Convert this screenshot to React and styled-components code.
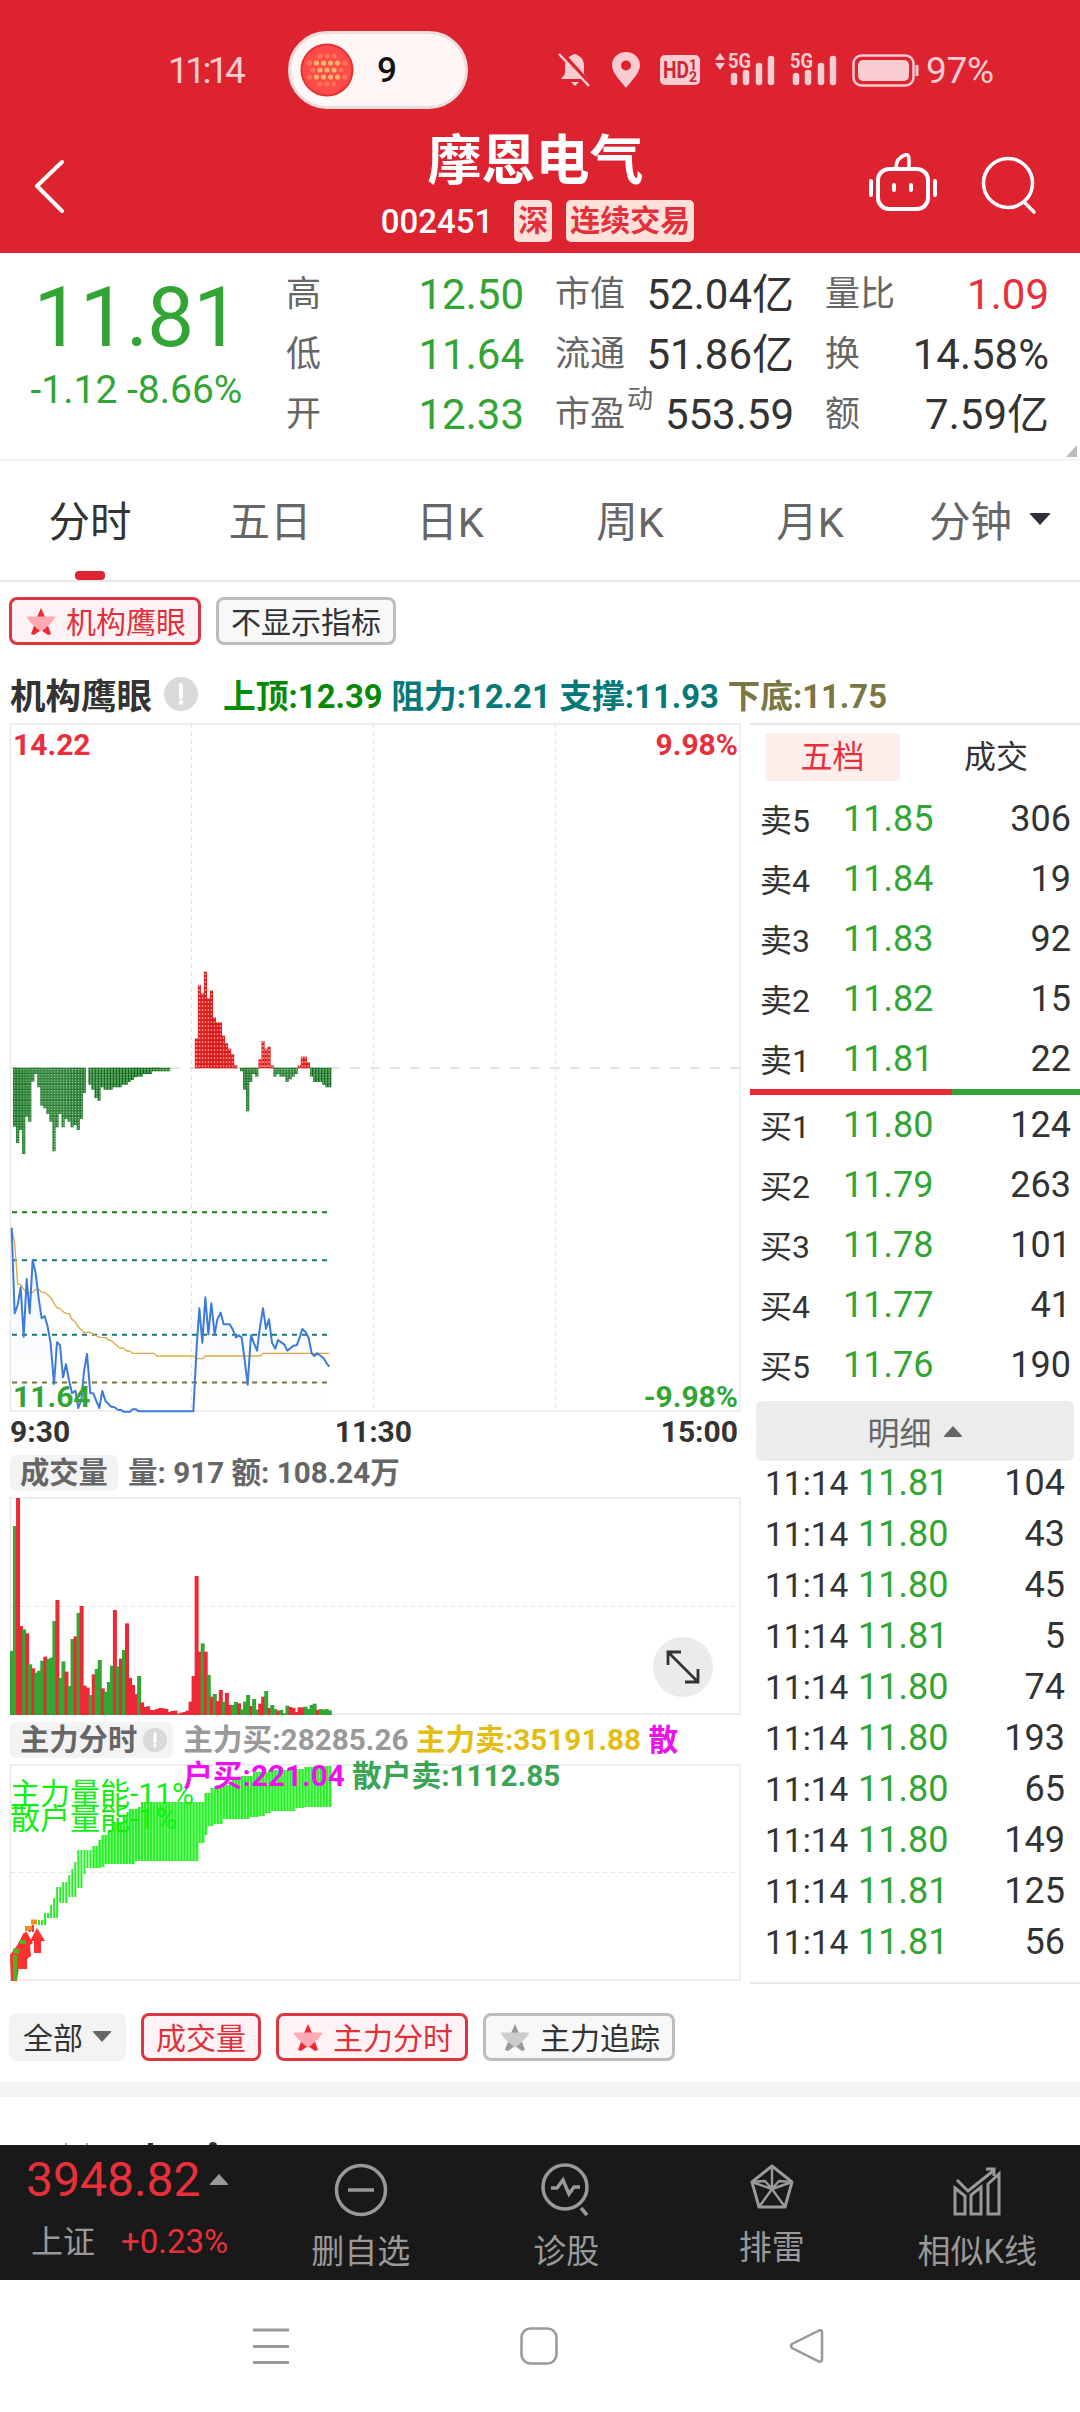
import React from 'react';
import styled, { createGlobalStyle } from 'styled-components';

const GlobalStyle = createGlobalStyle`
  * { box-sizing: border-box; }
  body {
    margin: 0;
    background: #fff;
    color: #333;
    font-family: Roboto, "Noto Sans CJK SC", sans-serif;
  }
  svg { display: block; flex: none; overflow: visible; }
`;

const RED = '#e8303a';
const GREEN = '#33a535';

/* ---------- data ---------- */

const quotes = [
  [['高', '12.50', GREEN], ['市值', '52.04亿'], ['量比', '1.09', RED]],
  [['低', '11.64', GREEN], ['流通', '51.86亿'], ['换', '14.58%']],
  [['开', '12.33', GREEN], ['市盈', '553.59', null, '动'], ['额', '7.59亿']],
];

const tabs = ['分时', '五日', '日K', '周K', '月K', '分钟'];

const asks = [['卖5', '11.85', 306], ['卖4', '11.84', 19], ['卖3', '11.83', 92], ['卖2', '11.82', 15], ['卖1', '11.81', 22]];
const bids = [['买1', '11.80', 124], ['买2', '11.79', 263], ['买3', '11.78', 101], ['买4', '11.77', 41], ['买5', '11.76', 190]];

const ticks = [
  ['11.81', 104], ['11.80', 43], ['11.80', 45], ['11.81', 5], ['11.80', 74],
  ['11.80', 193], ['11.80', 65], ['11.80', 149], ['11.81', 125], ['11.81', 56],
];

// price and average lines, three units to a pixel
const priceLine = '35,143 44,400 53,375 62,322 71,470 80,297 89,400 98,240 107,280 116,355 125,415 134,408 143,440 152,490 162,612 171,487 180,495 189,592 198,553 207,600 216,640 226,632 235,684 244,660 252,575 261,522 271,640 280,640 289,663 298,684 307,633 317,664 334,680 344,682 353,689 362,690 371,695 390,695 398,688 408,688 416,694 580,694 590,500 598,385 607,488 616,352 625,463 634,370 644,463 652,418 662,398 671,433 689,433 698,448 708,472 716,466 725,472 734,540 743,614 753,466 762,490 771,512 780,440 789,385 798,446 807,418 816,488 826,506 834,480 853,494 862,512 880,497 890,496 898,475 907,447 917,456 926,474 935,520 943,528 952,520 971,535 980,550 988,560';
const averageLine = '35,143 44,190 53,312 62,314 71,328 80,338 98,337 107,328 116,328 125,337 134,337 144,345 153,353 162,370 171,384 180,385 189,395 198,400 207,401 216,418 225,425 234,440 252,457 270,457 289,468 300,472 318,473 325,480 334,482 352,498 360,504 371,505 380,513 389,513 398,520 462,520 471,528 580,528 590,536 607,536 616,528 780,528 789,520 988,520';

// [first bar centre, bar ends]; baseline is 384
const eagleBars = [
  [44, 558, 607, 568, 640, 528, 543, 423, 400, 440, 495, 503, 520, 543, 632, 560, 520, 560, 535, 543, 560, 553, 568, 535, 457],
  [270, 432, 447, 472, 480, 440, 447, 447, 447, 440, 440, 440, 432, 432, 424, 418, 410, 408, 408, 400, 400, 400, 392, 392, 392, 392, 392, 392],
  [589, 295, 135, 160, 95, 175, 152, 232, 247, 247, 287, 310, 326, 342, 375],
  [725, 392, 447, 512, 424, 400, 408],
  [780, 358, 303, 326, 320, 375],
  [825, 408, 400, 408, 408, 424, 416, 408, 400],
  [898, 375, 350, 350, 367],
  [935, 408, 424, 424, 424, 432, 440, 440],
];

const volumes = 'G663 G288 R204 R588 G598 R610 G703 R715 G728 G722 G692 R680 G687 G683 G573 R510 G744 G694 R725 G768 G627 R619 G549 R528 R767 R773 G795 R733 G717 G690 R775 G785 G756 G707 R540 G709 R686 G660 R580 R744 R765 R792 G738 R817 R831 R829 R840 R840 R837 R834 R835 R837 R846 R843 R842 R851 R848 R846 R842 R815 R738 R438 R665 G640 R665 G735 R800 G792 R813 R780 G815 R789 R825 G825 G816 R820 G838 G815 G795 R828 G807 G839 R821 R800 G783 R834 G825 G837 R842 G840 G850 G827 R831 R834 R846 R832 R832 G830 G837 G825 G821 R840 G837 G839 G837 G841'.split(' ');

const bandTop = [[38, 1920], [42, 1913], [48, 1905], [51, 1898], [56, 1887], [60, 1882], [66, 1875], [69, 1869], [72, 1862], [77, 1850], [87, 1850], [92, 1846], [96, 1840], [100, 1835], [106, 1830], [112, 1822], [120, 1815], [128, 1809], [136, 1807], [139, 1802], [199, 1802], [203, 1793], [209, 1788], [215, 1785], [230, 1780], [240, 1776], [252, 1772], [268, 1770], [290, 1769], [302, 1767], [312, 1766]];
const bandBottom = [[38, 1925], [45, 1918], [54, 1918], [58, 1903], [64, 1903], [66, 1897], [73, 1897], [76, 1888], [79, 1888], [82, 1874], [86, 1868], [100, 1867], [104, 1864], [131, 1864], [134, 1861], [195, 1861], [198, 1843], [202, 1835], [206, 1826], [212, 1824], [220, 1819], [236, 1819], [248, 1817], [258, 1816], [263, 1813], [270, 1811], [289, 1811], [294, 1808], [302, 1807], [330, 1807]];

const levelAt = (steps, x) => {
  let y = steps[0][1];
  steps.forEach(([sx, sy]) => { if (sx <= x) y = sy; });
  return y;
};

/* ---------- header ---------- */

const Header = styled.header`
  height: 253px;
  background: #dc232f;
  color: #fff;
`;

const StatusBar = styled.div`
  display: flex;
  align-items: center;
  height: 109px;
  padding: 31px 0 0 168px;
`;

const StatusText = styled.span`
  flex: none;
  width: ${p => p.$width}px;
  color: #f8ccd0;
  font-size: 37px;
  letter-spacing: ${p => p.$tight}px;
  white-space: nowrap;
`;

const Island = styled.div`
  display: flex;
  align-items: center;
  flex: none;
  gap: 23px;
  width: 180px;
  height: 78px;
  margin: 0 90px 0 44px;
  padding-left: 9px;
  border: 3px solid #ecdcdc;
  border-radius: 39px;
  background: #fff6f6;
  color: #111;
  font-size: 35px;
  font-weight: 500;
`;

const TitleBar = styled.div`
  display: flex;
  justify-content: space-between;
  height: 143px;
  padding: 0 43px 0 32px;
`;

const StockName = styled.div`
  display: flex;
  flex-direction: column;
  align-items: center;
  padding: 21px 0 0 134px;
`;

const Name = styled.h1`
  margin: 0;
  font-size: 54px;
  line-height: 64px;
  font-weight: 700;
`;

const CodeRow = styled.div`
  display: flex;
  align-items: center;
  height: 42px;
  margin: 6px 0 0 4px;
  font-size: 33px;
  font-weight: 500;
`;

const Tag = styled.span`
  height: 42px;
  margin-left: ${p => p.$gap}px;
  padding: 0 4px;
  border-radius: 5px;
  background: #ffe1da;
  color: #e5303c;
  font-size: 30px;
  line-height: 41px;
  font-weight: 700;
`;

const HeaderIcons = styled.div`
  display: flex;
  align-items: flex-start;
  gap: 44px;
  padding-top: 43px;
  svg + svg { margin-top: 3px; }
`;

/* ---------- quote ---------- */

const Quote = styled.section`
  display: flex;
  position: relative;
  height: 208px;
  padding-top: 12px;
  border-bottom: 2px solid #f3f3f3;
`;

const LastPrice = styled.div`
  width: 286px;
  padding: 0 13px 0 0;
  color: ${GREEN};
  text-align: center;
`;

const Big = styled.div`
  margin-top: 9px;
  font-size: 84px;
  line-height: 88px;
  letter-spacing: -1px;
`;

const Change = styled.div`
  padding-top: 3px;
  font-size: 39px;
  line-height: 50px;
  white-space: nowrap;
`;

const Grid = styled.div`
  display: grid;
  grid-template-columns: 238px 239px 224px;
  grid-template-rows: repeat(3, 60px);
  column-gap: 31px;
`;

const Cell = styled.div`
  display: flex;
  align-items: center;
  justify-content: space-between;
  line-height: 60px;
  white-space: nowrap;
`;

const CellLabel = styled.span`
  display: flex;
  color: #666;
  font-size: 35px;
  sup {
    align-self: flex-start;
    margin-left: 2px;
    font-size: 26px;
    line-height: 28px;
  }
`;

const CellValue = styled.span`
  color: ${p => p.$color || '#333'};
  font-size: 42px;
`;

const Corner = styled.i`
  position: absolute;
  right: 3px;
  bottom: 2px;
  border-left: 11px solid transparent;
  border-bottom: 12px solid #bbb;
`;

/* ---------- tabs and chips ---------- */

const Tabs = styled.nav`
  display: flex;
  height: 121px;
  border-bottom: 2px solid #e6e6e6;
`;

const Tab = styled.div`
  display: flex;
  align-items: center;
  justify-content: center;
  position: relative;
  width: 180px;
  padding-bottom: 3px;
  gap: 17px;
  color: ${p => (p.$on ? '#333' : '#666')};
  font-size: 41.5px;
  &::after {
    content: '';
    display: ${p => (p.$on ? 'block' : 'none')};
    position: absolute;
    bottom: 0;
    width: 30px;
    height: 9px;
    border-radius: 4px;
    background: #dc232f;
  }
`;

const Caret = styled.i`
  border: ${p => p.$size}px solid transparent;
  border-top: ${p => p.$size + 1}px solid ${p => p.$color};
  border-bottom: 0;
  border-radius: 2px;
  transform: rotate(${p => (p.$up ? 180 : 0)}deg);
`;

const ChipRow = styled.div`
  display: flex;
  gap: 15px;
  padding: ${p => p.$top}px 9px 0;
`;

const Chip = styled.div`
  display: flex;
  align-items: center;
  gap: ${p => (p.$plain ? 9 : 11)}px;
  height: 48px;
  padding: 0 ${p => (p.$plain ? 14 : 12)}px 2px;
  border: ${p => (p.$plain ? 0 : 3)}px solid ${p => (p.$on ? '#dc3640' : '#bdbdbd')};
  border-radius: 8px;
  background: ${p => (p.$on ? '#fff2f4' : p.$plain ? '#f3f3f3' : '#f8f8f8')};
  color: ${p => (p.$on ? '#e0303b' : '#333')};
  font-size: 30px;
  white-space: nowrap;
  svg { margin: 2px 0 0 3px; }
`;

/* ---------- charts ---------- */

const IndicatorRow = styled.div`
  display: flex;
  align-items: center;
  height: 78px;
  padding: 19px 0 0 10px;
  font-size: 35.5px;
  font-weight: 700;
  white-space: nowrap;
`;

const Levels = styled.div`
  display: flex;
  gap: 8.5px;
  margin-left: 25px;
  font-size: 32.8px;
`;

const Main = styled.section`
  display: flex;
  height: 1261px;
`;

const Charts = styled.div`
  width: 750px;
`;

const TimeAxis = styled.div`
  display: flex;
  justify-content: space-between;
  height: 38px;
  padding: 0 12px 0 10px;
  font-size: 30px;
  line-height: 38px;
  font-weight: 700;
  span:nth-child(2) { margin-left: 16px; }
`;

const SubHeader = styled.div`
  display: flex;
  align-items: flex-start;
  position: relative;
  height: ${p => p.$height}px;
  padding: ${p => p.$top}px 0 0 10px;
  color: #666;
  line-height: 36px;
  font-weight: 700;
`;

const SubTag = styled.span`
  display: flex;
  align-items: center;
  gap: 6px;
  flex: none;
  height: 36px;
  padding: 0 ${p => p.$end}px 0 10px;
  border-radius: 6px;
  background: #f3f3f3;
  font-size: 29.3px;
  line-height: 34px;
`;

// the wrapped second line runs down over the plot below
const Legend = styled.div`
  width: 510px;
  margin-left: 10px;
  font-size: 29.7px;
  line-height: 35.5px;
  word-break: break-all;
  z-index: 1;
`;

const VolumeText = styled.div`
  margin-left: 10px;
  font-size: 29.6px;
`;

const Tint = styled.span`
  color: ${p => p.$color};
`;

const PlotBox = styled.div`
  position: relative;
`;

const Expand = styled.button`
  display: flex;
  align-items: center;
  justify-content: center;
  position: absolute;
  right: 37px;
  bottom: 18px;
  width: 60px;
  height: 60px;
  padding: 0;
  border: 0;
  border-radius: 50%;
  background: #ebebeb;
`;

/* ---------- order book ---------- */

const Book = styled.aside`
  width: 330px;
  border-top: 2px solid #e8e8e8;
  border-bottom: 2px solid #e8e8e8;
`;

const BookTabs = styled.div`
  display: flex;
  height: 64px;
  padding: 8px 0 8px 15px;
`;

const BookTab = styled.div`
  flex: none;
  width: ${p => (p.$on ? 135 : 180)}px;
  padding-left: ${p => (p.$on ? 0 : 12)}px;
  border-radius: 4px;
  background: ${p => (p.$on ? '#fdeeec' : 'none')};
  color: ${p => (p.$on ? RED : '#333')};
  font-size: 32px;
  line-height: 48px;
  text-align: center;
`;

const BookRow = styled.div`
  display: flex;
  align-items: center;
  height: 60px;
  padding: 0 9px 0 10px;
  font-size: 36px;
`;

const Side = styled.span`
  width: 83px;
  padding-bottom: 3px;
  font-size: 32px;
`;

const Price = styled.span`
  flex: 1;
  color: ${GREEN};
`;

const Ratio = styled.div`
  height: 6px;
  background: linear-gradient(90deg, #ea2c39 202px, ${GREEN} 202px);
`;

const DetailButton = styled.div`
  display: flex;
  align-items: center;
  justify-content: center;
  gap: 11px;
  height: 60px;
  margin: 6px 6px -4px;
  border-radius: 6px;
  background: #ececec;
  color: #666;
  font-size: 32px;
`;

const TickRow = styled.div`
  display: flex;
  align-items: center;
  height: 51px;
  padding: 0 15px 0 15px;
  font-size: 36px;
`;

const TickTime = styled.span`
  width: 93px;
  padding-top: 2px;
  font-size: 33.5px;
`;

/* ---------- bottom ---------- */

const Band = styled.div`
  height: 15px;
  margin-top: 21px;
  background: #f3f3f3;
`;

const NextCard = styled.div`
  display: flex;
  align-items: flex-end;
  height: 48px;
`;

const ActionBar = styled.footer`
  display: flex;
  height: 135px;
  background: #191919;
  color: #999;
`;

const IndexCell = styled.div`
  width: 258px;
  padding: 8px 0 0 26px;
  color: ${RED};
`;

const IndexValue = styled.div`
  display: flex;
  align-items: center;
  gap: 8px;
  font-size: 48px;
  line-height: 53px;
`;

const IndexChange = styled.div`
  display: flex;
  gap: 26px;
  padding: 13px 0 0 5px;
  font-size: 33px;
  line-height: 46px;
  span { color: #999; font-size: 32px; }
`;

const Action = styled.div`
  display: flex;
  flex-direction: column;
  align-items: center;
  width: 205.5px;
  padding-top: ${p => p.$top || 16}px;
  font-size: 33px;
  line-height: 46px;
  svg { margin-bottom: 12px; }
`;

const SystemNav = styled.div`
  display: flex;
  align-items: center;
  height: 132px;
  padding-left: 252px;
  gap: 229.5px;
`;

/* ---------- icons ---------- */

const Star = ({ on }) => (
  <svg width="28" height="27" viewBox="0 0 28 27">
    <path d="M14 0l4.2 9.5H28l-7.5 7L24 26l-3 1-7-5-7 5-3-1 3.500-9.500L0 9.500h9.800z" fill={on ? '#ee2733' : '#999'} />
    <path d="M0 8.500h28c-2 6-7 9-10.500 12.500L14 23.500 10.500 21C7 17.500 2 14.500 0 8.500z" fill={on ? '#ffa9b0' : '#ccc'} />
  </svg>
);

const Info = ({ size }) => (
  <svg width={size} height={size} viewBox="0 0 34 34">
    <circle cx="17" cy="17" r="17" fill="#d9d9d9" />
    <path d="M17 8v12M17 24.500v1.500" stroke="#fff" strokeWidth="4" strokeLinecap="round" />
  </svg>
);

const Signal = ({ arrows }) => (
  <svg width={arrows ? 63 : 49} height="36" viewBox={arrows ? '0 0 63 36' : '14 0 49 36'}>
    {arrows && <path d="M1 8l5-7 5 7zM1 11h10l-5 7z" fill="#f8ccd0" />}
    <text x="14" y="16" fontSize="20" fontWeight="700" fill="#f8ccd0" textLength="23" lengthAdjust="spacingAndGlyphs">5G</text>
    <g stroke="#f8ccd0" strokeWidth="6.500" strokeLinecap="round">
      <path d="M20 24v6M32 21v9M45 14v16M57 7v23" />
    </g>
  </svg>
);

const StatusIcons = styled.div`
  display: flex;
  align-items: center;
  width: 442px;
`;

const Gap = styled.i`
  flex: none;
  width: ${p => p.$w}px;
`;

const dots = [];
for (let r = -2; r <= 2; r++) {
  for (let c = -3; c <= 2; c++) {
    const odd = Math.abs(r) % 2;
    const x = 26 + c * 7 + (odd ? 3.5 : 0);
    if (Math.hypot(x - 26, r * 7) < 19) dots.push([x, 26 + r * 7]);
  }
}

const frame = (top, bottom) => (
  <rect x="10.500" y={top} width="729.500" height={bottom - top} fill="none" stroke="#e6e6e6" strokeWidth="1.300" />
);

const PriceChart = () => (
  <svg width="750" height="690" viewBox="0 723 750 690">
    <defs>
      <pattern id="down" width="9.080" height="16" patternUnits="userSpaceOnUse" x="39.500" y="384">
        <rect width="9.080" height="16" fill="#0a6a16" />
        <rect x="3" y="2.500" width="4" height="4" fill="#b5dcb7" />
        <rect x="3" y="9.500" width="4" height="5" fill="#9ccc9f" />
      </pattern>
      <pattern id="up" width="9.080" height="12" patternUnits="userSpaceOnUse" x="39.500" y="384">
        <rect width="9.080" height="12" fill="#e01515" />
        <rect x="3" y="3" width="3.600" height="6.500" fill="#f8a8a8" />
      </pattern>
      <linearGradient id="fade" x1="0" y1="0" x2="0" y2="1">
        <stop offset="0" stopColor="#3b7ddd" stopOpacity="0.070" />
        <stop offset="1" stopColor="#3b7ddd" stopOpacity="0" />
      </linearGradient>
    </defs>
    {frame(724, 1411)}
    <path d="M191.500 724v687M373.500 724v687M555.500 724v687" stroke="#e2e2e2" strokeDasharray="4 4" />
    <path d="M10 1068h730" stroke="#dcdcdc" strokeWidth="1.500" strokeDasharray="10 10" />
    <g transform="translate(0 940) scale(0.33333)">
      {eagleBars.map(([start, ...ends]) => ends.map((end, i) => (
        <rect
          key={start + i}
          x={start + i * 9.08 - 4.6}
          y={Math.min(end, 383)}
          width="9.200"
          height={Math.abs(end - 383) + 2}
          fill={end < 384 ? 'url(#up)' : 'url(#down)'}
        />
      )))}
    </g>
    <g strokeWidth="2" strokeDasharray="5 5">
      <path d="M12 1212.300h316" stroke="#168016" />
      <path d="M12 1260.300h316" stroke="#177575" />
      <path d="M12 1334.700h316" stroke="#177575" />
      <path d="M12 1382.600h316" stroke="#79743d" />
    </g>
    <g transform="translate(0 1180) scale(0.33333)" fill="none" strokeLinejoin="round">
      <polygon points={`${priceLine} 988,694 35,694`} fill="url(#fade)" />
      <polyline points={averageLine} stroke="#dfaa45" strokeWidth="4" />
      <polyline points={priceLine} stroke="#3c7bdc" strokeWidth="6" />
    </g>
    <text x="13" y="1407" fontSize="30" fontWeight="700" fill={GREEN}>11.64</text>
    <text x="13" y="755" fontSize="30" fontWeight="700" fill={RED}>14.22</text>
    <text x="738" y="755" fontSize="30" fontWeight="700" fill={RED} textAnchor="end">9.98%</text>
    <text x="738" y="1407" fontSize="30" fontWeight="700" fill={GREEN} textAnchor="end">-9.98%</text>
  </svg>
);

const VolumeChart = () => (
  <svg width="750" height="218" viewBox="0 1497 750 218">
    {frame(1498, 1714)}
    <path d="M11 1606.500h729" stroke="#e2e2e2" strokeDasharray="4 4" />
    <g transform="translate(0 1430) scale(0.33333)">
      {volumes.map((v, i) => {
        const top = Number(v.slice(1));
        return <rect key={i} x={30 + i * 9.08} y={top} width="12" height={855 - top} fill={v[0] === 'R' ? '#ee2836' : '#33a733'} />;
      })}
    </g>
  </svg>
);

const MoneyChart = () => {
  const xs = [];
  for (let x = 38; x < 331; x += 3.03) xs.push(x);
  return (
    <svg width="750" height="218" viewBox="0 1764 750 218">
      {frame(1765, 1980)}
      <path d="M11 1872.500h729" stroke="#e2e2e2" strokeDasharray="4 4" />
      {xs.map(x => {
        const y = levelAt(bandTop, x);
        const h = levelAt(bandBottom, x) - y;
        return (
          <g key={x}>
            {x > 90 && <rect x={x} y={y} width="3.100" height={h} fill="#7dff7d" />}
            <rect x={x} y={y} width="2" height={h} fill="#2bec2b" />
          </g>
        );
      })}
      <g fill="#ff3030">
        <path d="M37 1928l8 13h-4v12h-7v-12h-4z" />
        <path d="M26 1931l7 12-3 2 1 11-4 3v10h-8v-2l-2 14h-6l-1-26 8-11z" />
        <path d="M24 1932l5 13-3 1 1 10h-9v-12l3-6z" />
      </g>
      <path d="M15 1980v-25M20 1942h6" stroke="#4eb51e" strokeWidth="4" />
      <path d="M13 1951h6" stroke="#4eb51e" strokeWidth="5" />
      <path d="M31 1922h6M25 1928.500h7" stroke="#f58a1f" strokeWidth="5" />
      <path d="M33 1925v7M30 1930v2" stroke="#e8402a" strokeWidth="2" />
      <g fontSize="30" fill="#10f010">
        <text x="10" y="1804">主力量能-11%</text>
        <text x="10" y="1829">散户量能-1%</text>
      </g>
    </svg>
  );
};

export default function App() {
  return (
    <>
      <GlobalStyle />
      <Header>
        <StatusBar>
          <StatusText $width={76} $tight={-3.6}>11:14</StatusText>
          <Island>
            <svg width="54" height="54" viewBox="-1 -1 54 54">
              <circle cx="26" cy="26" r="25.500" fill="#ff4a4a" stroke="#e03434" strokeWidth="2" />
              {dots.map(([x, y], i) => (
                <circle key={i} cx={x} cy={y} r="2.600" fill={Math.hypot(x - 26, y - 26) < 13 ? '#ffb469' : '#ff7350'} />
              ))}
            </svg>
            9
          </Island>
          <StatusIcons>
            <svg width="33" height="36" viewBox="0 0 33 36">
              <path d="M17 2c6 2 9 6 9 12v8l4 5H3l4-5v-8C7 8 10 4 17 2zM13 30h8l-4 4z" fill="#f8ccd0" />
              <path d="M4 1l29 32" stroke="#dc232f" strokeWidth="4" />
              <path d="M1 2l30 32" stroke="#f8ccd0" strokeWidth="2.500" />
            </svg>
            <Gap $w={21} />
            <svg width="28" height="36" viewBox="0 0 28 36">
              <path d="M14 0c8 0 14 6 14 13 0 8-8 15-14 23C8 28 0 21 0 13 0 6 6 0 14 0zm0 8.500a5 5 0 100 10 5 5 0 000-10z" fill="#f8ccd0" fillRule="evenodd" />
            </svg>
            <Gap $w={20} />
            <svg width="40" height="30" viewBox="0 0 40 30">
              <rect width="40" height="30" rx="5" fill="#f8ccd0" />
              <g fill="#c92934" fontWeight="700">
                <text x="3" y="23" fontSize="23" textLength="26" lengthAdjust="spacingAndGlyphs">HD</text>
                <text x="29" y="15" fontSize="14">1</text>
                <text x="29" y="27" fontSize="14">2</text>
              </g>
            </svg>
            <Gap $w={14} />
            <Signal arrows />
            <Gap $w={13} />
            <Signal />
            <Gap $w={13} />
            <svg width="67" height="33" viewBox="0 0 67 33">
              <rect x="1.500" y="1.500" width="60" height="30" rx="8" fill="none" stroke="#f8ccd0" strokeWidth="2.500" />
              <rect x="6" y="6" width="51" height="21" rx="5" fill="#f8ccd0" />
              <path d="M65 11v11" stroke="#f8ccd0" strokeWidth="3" />
            </svg>
            <Gap $w={7} />
            <StatusText $width={74} $tight={-0.3}>97%</StatusText>
          </StatusIcons>
        </StatusBar>
        <TitleBar>
          <svg width="36" height="55" viewBox="0 0 36 55" style={{ marginTop: 50 }}>
            <path d="M30 3L5 27l25 25" fill="none" stroke="#fff" strokeWidth="4" strokeLinecap="round" strokeLinejoin="round" />
          </svg>
          <StockName>
            <Name>摩恩电气</Name>
            <CodeRow>
              002451
              <Tag $gap={21}>深</Tag>
              <Tag $gap={14}>连续交易</Tag>
            </CodeRow>
          </StockName>
          <HeaderIcons>
            <svg width="68" height="60" viewBox="0 0 68 60" fill="none" stroke="#fff" strokeWidth="4">
              <rect x="9" y="17" width="50" height="40" rx="11" />
              <path d="M2 29v14M66 29v14M25 33v5M42 33v5" strokeLinecap="round" />
              <path d="M27 16c0-6 3-11 9-13 3-1 4 1 4 4v9" strokeWidth="3.500" />
            </svg>
            <svg width="56" height="60" viewBox="0 0 56 60" fill="none" stroke="#fff" strokeWidth="3.600">
              <circle cx="27" cy="28" r="24.500" />
              <path d="M43 47l10 10" strokeLinecap="round" />
            </svg>
          </HeaderIcons>
        </TitleBar>
      </Header>

      <Quote>
        <LastPrice>
          <Big>11.81</Big>
          <Change>-1.12 -8.66%</Change>
        </LastPrice>
        <Grid>
          {quotes.flat().map(([label, value, color, sup]) => (
            <Cell key={label}>
              <CellLabel>{label}{sup && <sup>{sup}</sup>}</CellLabel>
              <CellValue $color={color}>{value}</CellValue>
            </Cell>
          ))}
        </Grid>
        <Corner />
      </Quote>

      <Tabs>
        {tabs.map((tab, i) => (
          <Tab key={tab} $on={i === 0}>
            {tab}
            {i === 5 && <Caret $size={11} $color="#2f3140" />}
          </Tab>
        ))}
      </Tabs>

      <ChipRow $top={15}>
        <Chip $on><Star on />机构鹰眼</Chip>
        <Chip>不显示指标</Chip>
      </ChipRow>
      <IndicatorRow>
        机构鹰眼
        <Gap $w={12} />
        <Info size={34} />
        <Levels>
          <Tint $color="#058a05">上顶:12.39</Tint>
          <Tint $color="#057878">阻力:12.21</Tint>
          <Tint $color="#057878">支撑:11.93</Tint>
          <Tint $color="#7b7743">下底:11.75</Tint>
        </Levels>
      </IndicatorRow>

      <Main>
        <Charts>
          <PriceChart />
          <TimeAxis><span>9:30</span><span>11:30</span><span>15:00</span></TimeAxis>
          <SubHeader $height={46} $top={4}>
            <SubTag $end={10}>成交量</SubTag>
            <VolumeText>量: 917 额: 108.24万</VolumeText>
          </SubHeader>
          <PlotBox>
            <VolumeChart />
            <Expand>
              <svg width="34" height="34" viewBox="0 0 34 34" fill="none" stroke="#333" strokeWidth="2.800">
                <path d="M3 3l28 28M2 15V2h13M32 19v13H19" />
              </svg>
            </Expand>
          </PlotBox>
          <SubHeader $height={49} $top={7}>
            <SubTag $end={6}>主力分时<Info size={24} /></SubTag>
            <Legend>
              <Tint $color="#999">主力买:28285.26 </Tint>
              <Tint $color="#e3bd12">主力卖:35191.88 </Tint>
              <Tint $color="#ee10ee">散户买:221.04 </Tint>
              <Tint $color="#3aa655">散户卖:1112.85</Tint>
            </Legend>
          </SubHeader>
          <MoneyChart />
        </Charts>

        <Book>
          <BookTabs>
            <BookTab $on>五档</BookTab>
            <BookTab>成交</BookTab>
          </BookTabs>
          {asks.map(([side, price, qty]) => (
            <BookRow key={side}><Side>{side}</Side><Price>{price}</Price>{qty}</BookRow>
          ))}
          <Ratio />
          {bids.map(([side, price, qty]) => (
            <BookRow key={side}><Side>{side}</Side><Price>{price}</Price>{qty}</BookRow>
          ))}
          <DetailButton>明细<Caret $up $size={10} $color="#666" /></DetailButton>
          {ticks.map(([price, qty], i) => (
            <TickRow key={i}><TickTime>11:14</TickTime><Price>{price}</Price>{qty}</TickRow>
          ))}
        </Book>
      </Main>

      <ChipRow $top={29}>
        <Chip $plain>全部<Caret $size={10} $color="#666" /></Chip>
        <Chip $on>成交量</Chip>
        <Chip $on><Star on />主力分时</Chip>
        <Chip><Star />主力追踪</Chip>
      </ChipRow>
      <Band />
      <NextCard>
        {/* top edge of the next card's heading */}
        <svg width="250" height="3" viewBox="0 0 250 3">
          <path d="M65 1h2v2h-2zM86 1h2v2h-2z" fill="#aaa" />
          <path d="M148 1h5v2h-5zM209 3c0-4 8-4 8 0z" fill="#333" />
        </svg>
      </NextCard>

      <ActionBar>
        <IndexCell>
          <IndexValue>3948.82<Caret $up $size={10} $color="#999" /></IndexValue>
          <IndexChange><span>上证</span>+0.23%</IndexChange>
        </IndexCell>
        <Action $top={18}>
          <svg width="54" height="54" viewBox="0 0 54 54" fill="none" stroke="#999" strokeWidth="3.500">
            <circle cx="27" cy="27" r="24.500" />
            <path d="M14 27h26" />
          </svg>
          删自选
        </Action>
        <Action $top={18}>
          <svg width="54" height="54" viewBox="0 0 54 54" fill="none" stroke="#999" strokeWidth="3.500">
            <circle cx="26" cy="24" r="22" />
            <path d="M12 25h6l6-8 6 14 5-7h6M42 45l6 7" />
          </svg>
          诊股
        </Action>
        <Action>
          <svg width="46" height="52" viewBox="0 0 46 52" fill="none" stroke="#999" strokeWidth="3" strokeLinejoin="round">
            <path d="M23 5l20 16-7 25H10L3 21z" />
            <path d="M23 5v23M3 21l20 7 20-7M10 46l13-18 13 18M3 21l13-1 7 8 7-8 13 1" strokeWidth="2.400" />
          </svg>
          排雷
        </Action>
        <Action $top={18}>
          <svg width="50" height="54" viewBox="0 0 50 54" fill="none" stroke="#999" strokeWidth="3">
            <path d="M3 25l10 8v18H3zM19 32l10-8v27H19zM36 21l11-10v40H36z" />
            <path d="M5 17l11 11L41 8M34 6h8v7" />
          </svg>
          相似K线
        </Action>
      </ActionBar>

      <SystemNav>
        <svg width="38" height="38" viewBox="0 0 38 38">
          <path d="M1 3h36M1 19.500h36M1 35.500h36" stroke="#999" strokeWidth="3" />
        </svg>
        <svg width="38" height="38" viewBox="0 0 38 38">
          <rect x="1.500" y="1.500" width="35" height="35" rx="9" fill="none" stroke="#999" strokeWidth="2.500" />
        </svg>
        <svg width="38" height="38" viewBox="0 0 38 38">
          <path d="M32 3.500L5 17q-2 2 0 4l27 13.500q3 1 3-2v-27q0-3-3-2z" fill="none" stroke="#999" strokeWidth="2.500" />
        </svg>
      </SystemNav>
    </>
  );
}
